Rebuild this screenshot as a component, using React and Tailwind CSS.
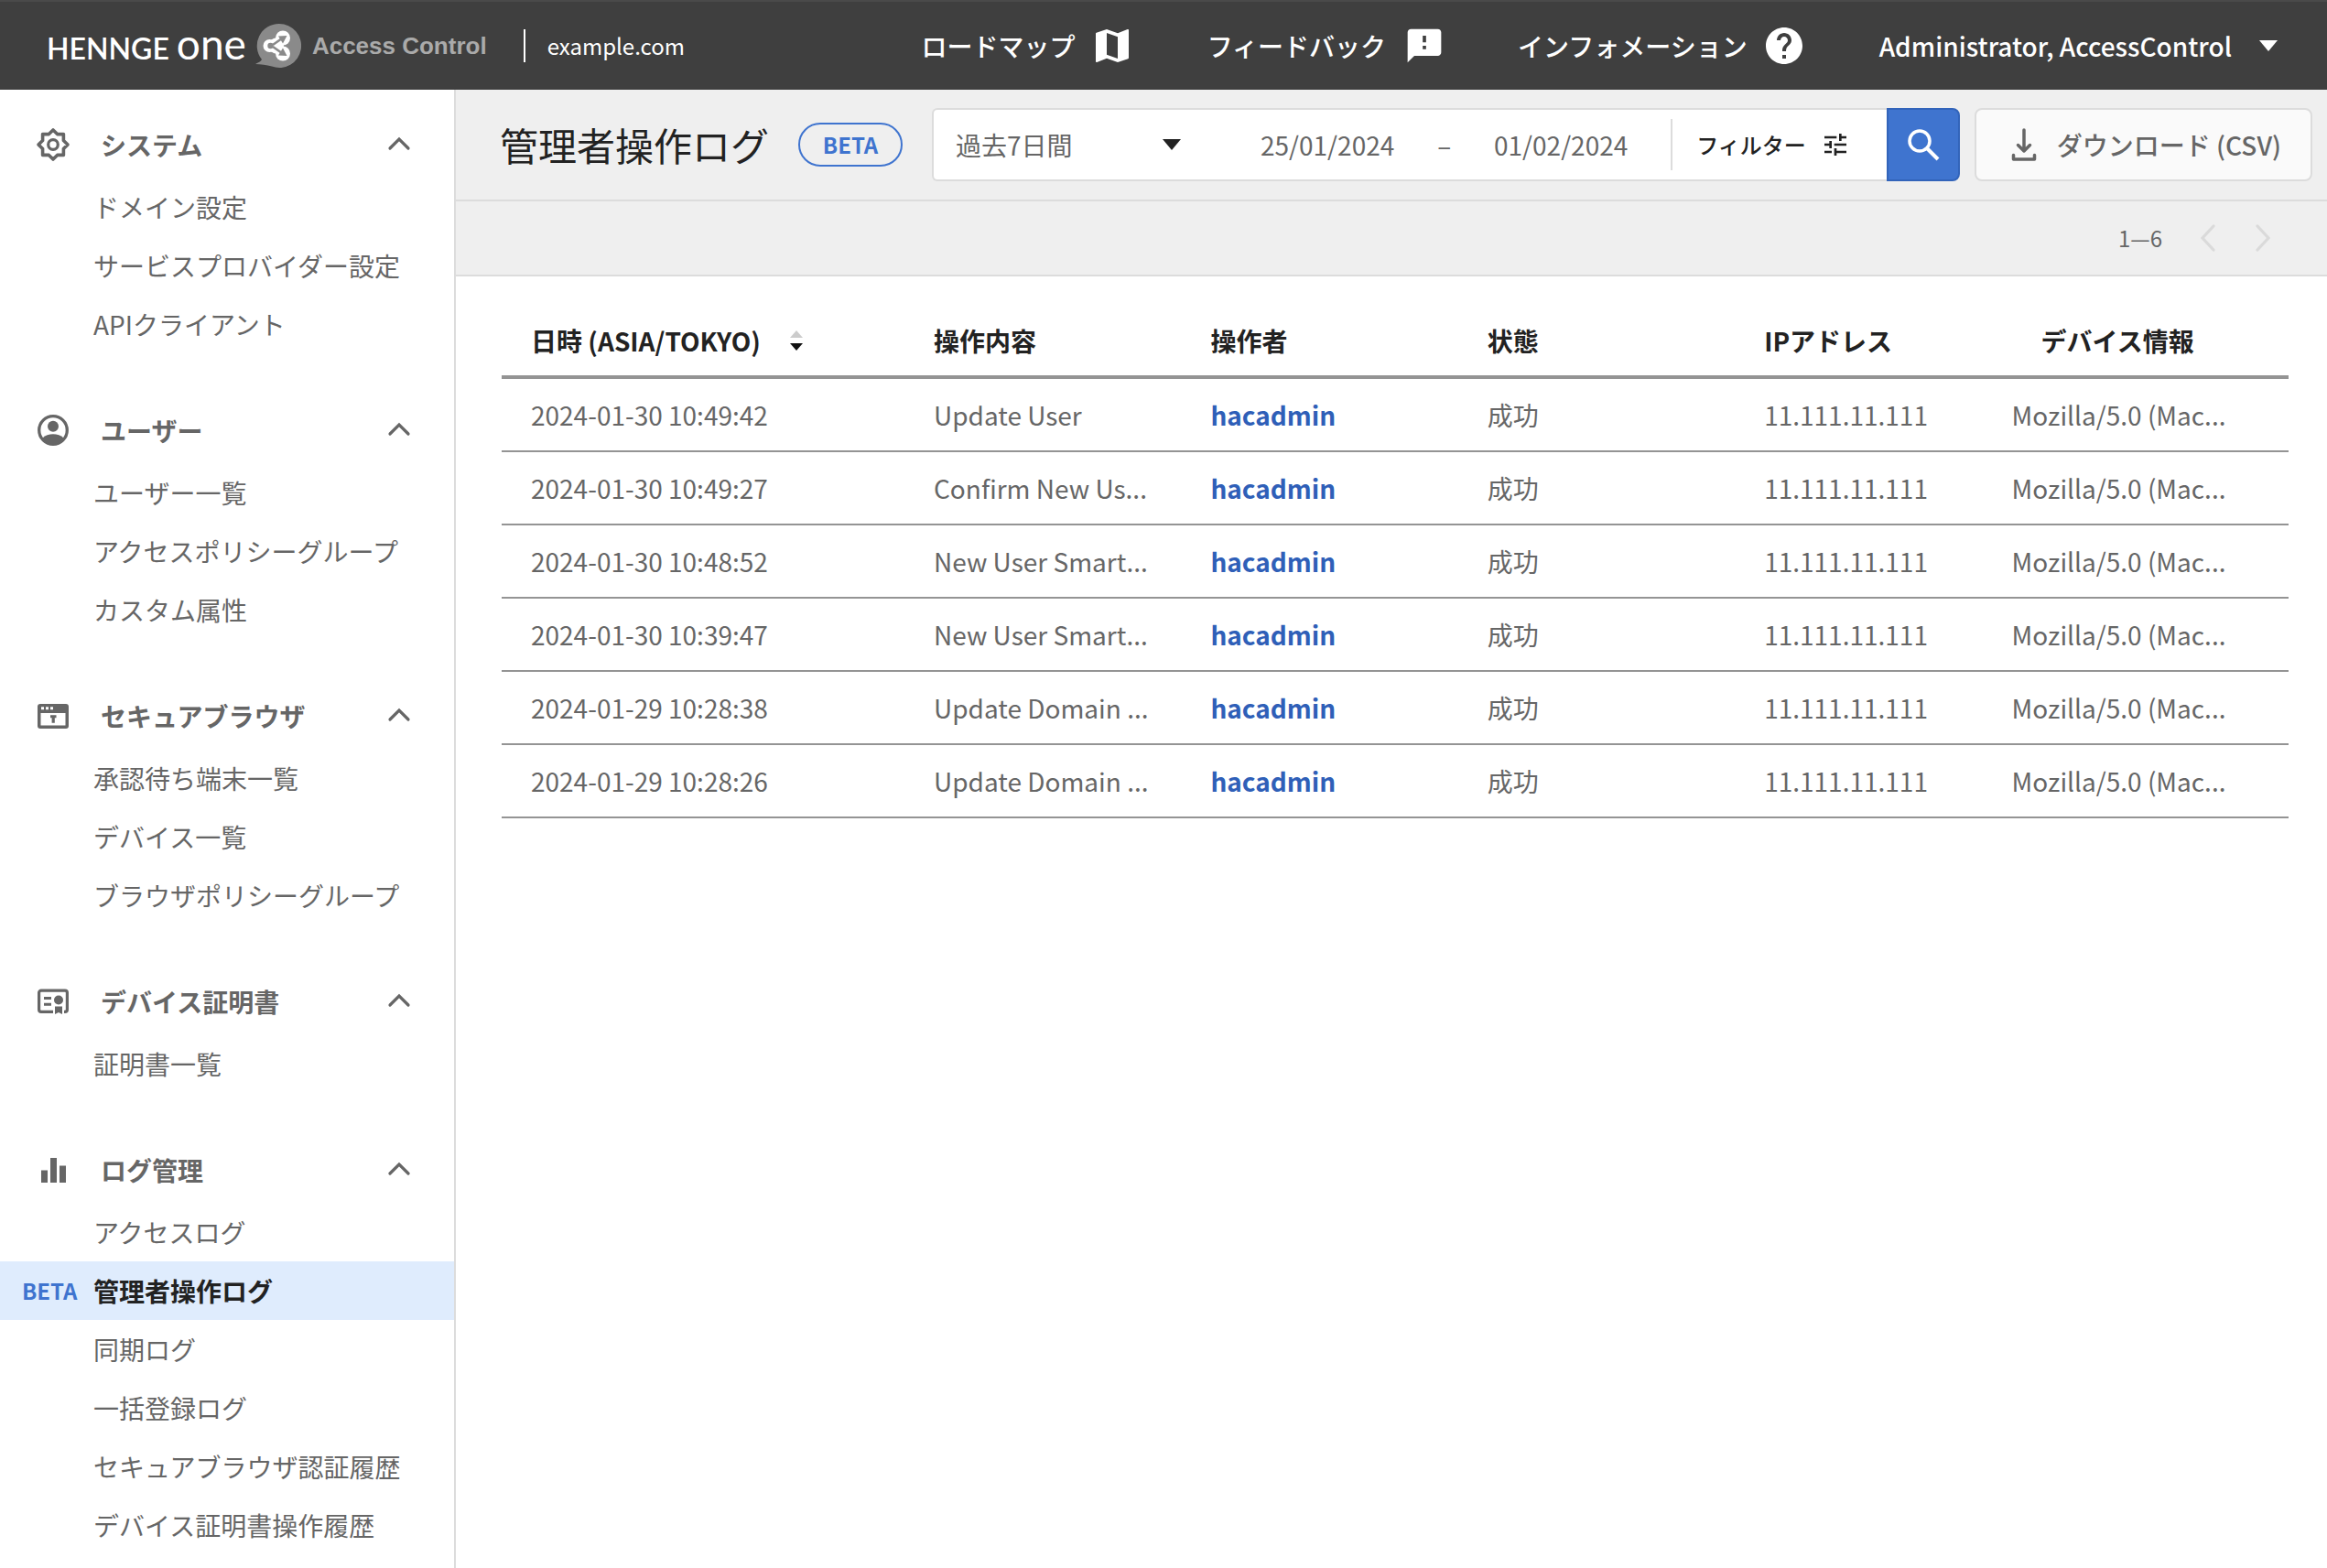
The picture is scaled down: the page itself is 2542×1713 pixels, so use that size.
import React from 'react';
import { MdMap, MdFeedback, MdHelp, MdTune } from 'react-icons/md';

const menu = [
  {
    title: 'システム',
    icon: 'gear',
    items: ['ドメイン設定', 'サービスプロバイダー設定', 'APIクライアント'],
  },
  {
    title: 'ユーザー',
    icon: 'user',
    items: ['ユーザー一覧', 'アクセスポリシーグループ', 'カスタム属性'],
  },
  {
    title: 'セキュアブラウザ',
    icon: 'browser',
    items: ['承認待ち端末一覧', 'デバイス一覧', 'ブラウザポリシーグループ'],
  },
  {
    title: 'デバイス証明書',
    icon: 'certificate',
    items: ['証明書一覧'],
  },
  {
    title: 'ログ管理',
    icon: 'bars',
    items: [
      'アクセスログ',
      '管理者操作ログ',
      '同期ログ',
      '一括登録ログ',
      'セキュアブラウザ認証履歴',
      'デバイス証明書操作履歴',
    ],
  },
];

const activeItem = '管理者操作ログ';

const logs = [
  { time: '2024-01-30 10:49:42', action: 'Update User' },
  { time: '2024-01-30 10:49:27', action: 'Confirm New Us...' },
  { time: '2024-01-30 10:48:52', action: 'New User Smart...' },
  { time: '2024-01-30 10:39:47', action: 'New User Smart...' },
  { time: '2024-01-29 10:28:38', action: 'Update Domain ...' },
  { time: '2024-01-29 10:28:26', action: 'Update Domain ...' },
];

function MenuIcon({ name }) {
  switch (name) {
    case 'gear':
      return (
        <svg viewBox="0 0 40 40" className="size-10" fill="none" stroke="currentColor" strokeWidth="3.6" strokeLinejoin="round">
          <path d="M20 4l4.6 4.6h6.8v6.8L36 20l-4.6 4.6v6.8h-6.8L20 36l-4.6-4.6H8.6v-6.8L4 20l4.6-4.6V8.6h6.8z" />
          <circle cx="20" cy="20" r="5.3" strokeWidth="3.2" />
        </svg>
      );
    case 'user':
      return (
        <svg viewBox="0 0 40 40" className="size-10">
          <circle cx="20" cy="20" r="15.3" fill="none" stroke="currentColor" strokeWidth="3.3" />
          <circle cx="20" cy="15.8" r="6" fill="currentColor" />
          <path d="M8.5 28.5c3-3 7-4.3 11.5-4.3s8.5 1.3 11.5 4.3c-2.5 4-6.5 6.7-11.5 6.7s-9-2.7-11.5-6.7z" fill="currentColor" />
        </svg>
      );
    case 'browser':
      return (
        <svg viewBox="0 0 40 40" className="size-10" fill="currentColor">
          <path
            fillRule="evenodd"
            d="M6 7h28a3 3 0 0 1 3 3v21a3 3 0 0 1-3 3H6a3 3 0 0 1-3-3V10a3 3 0 0 1 3-3zM6.5 17v13.5h27V17zM7 10.3v3h3v-3zM12 10.3v3h3v-3zM17 10.3v3h3v-3z"
          />
          <path d="M17 19.3h6.5v3h-1.7v5.4h-3.2v-5.4H17z" />
        </svg>
      );
    case 'certificate':
      return (
        <svg viewBox="0 0 40 40" className="size-10" fill="none" stroke="currentColor" strokeWidth="3.2">
          <path d="M20 31.4H7a2.4 2.4 0 0 1-2.4-2.4V10.6A2.4 2.4 0 0 1 7 8.2h26a2.4 2.4 0 0 1 2.4 2.4V29a2.4 2.4 0 0 1-2.4 2.4h-1" />
          <path d="M10 16.5h8M10 23.2h8" strokeWidth="3" />
          <circle cx="26" cy="18.5" r="5" fill="currentColor" stroke="none" />
          <path d="M22 25.5h8V34l-4-2-4 2z" fill="currentColor" stroke="none" />
        </svg>
      );
    default:
      return (
        <svg viewBox="0 0 40 40" className="size-10" fill="currentColor">
          <path d="M7 20.5h7V34H7zM17 7h7v27h-7zM27 15.5h7V34h-7z" />
        </svg>
      );
  }
}

function BubbleLogo() {
  return (
    <svg viewBox="0 0 52 50" className="w-[52px] h-[50px]">
      <path d="M28 1a24 24 0 1 1-8 46.600C14 45.500 8 45.500 2 45c3-1.500 6-3 7-5A24 24 0 0 1 28 1z" fill="#8a8a8a" />
      <path d="M18 25l6-3.500M18 25l6 3.500" stroke="#fff" strokeWidth="10" strokeLinecap="round" />
      <g fill="#fff">
        <circle cx="17.500" cy="25" r="7" />
        <circle cx="32" cy="16.500" r="8" />
        <circle cx="32" cy="33.500" r="8" />
        <circle cx="28" cy="25" r="5" />
      </g>
      <circle cx="18.500" cy="25" r="3.200" fill="#8a8a8a" />
      <path d="M21 24l10-7M21 26l10 7" stroke="#8a8a8a" strokeWidth="2.600" />
      <path d="M27 14.500l9.500-.5-4.500 8.500zM27 35.500l9.500.5-4.500-8.500z" fill="#8a8a8a" />
    </svg>
  );
}

function Triangle() {
  return (
    <svg viewBox="0 0 20 12" className="w-5 h-3" fill="currentColor">
      <path d="M0 0h20L10 12z" />
    </svg>
  );
}

function Chevron({ d }) {
  return (
    <svg viewBox="0 0 32 32" className="size-8" fill="none" stroke="currentColor" strokeWidth="3.2" strokeLinecap="round">
      <path d={d} />
    </svg>
  );
}

function Header() {
  return (
    <header className="flex items-center h-[98px] bg-[#3f3f3f] border-t-2 border-[#4a4a4a] pl-[51px] pr-[54px] text-white">
      <a href="#home" className="flex items-center">
        <span className="flex items-baseline gap-2 font-[Lato]">
          <span className="text-[32px] leading-[60px] font-semibold">HENNGE</span>
          <span className="text-[46px] leading-[60px]">one</span>
        </span>
        <span className="ml-2">
          <BubbleLogo />
        </span>
        <span className="ml-3 font-['Liberation_Sans'] font-bold text-[26px] text-[#aaaaaa]">Access Control</span>
      </a>
      <div className="w-0.5 h-9 ml-10 mr-6 bg-white" />
      <span className="text-[24px]">example.com</span>

      <nav className="flex items-center gap-20 ml-auto text-[28px] font-medium">
        <a href="#roadmap" className="flex items-center gap-4">
          ロードマップ
          <MdMap className="size-12" />
        </a>
        <a href="#feedback" className="flex items-center gap-5">
          フィードバック
          <MdFeedback className="size-11" />
        </a>
        <a href="#information" className="flex items-center gap-4">
          インフォメーション
          <MdHelp className="size-12" />
        </a>
        <button type="button" className="flex items-center gap-[30px]">
          Administrator, AccessControl
          <Triangle />
        </button>
      </nav>
    </header>
  );
}

function Sidebar() {
  return (
    <aside className="w-[498px] shrink-0 border-r-2 border-[#dcdcdc] pt-6 text-[28px] text-[#666666]">
      {menu.map((group) => (
        <section key={group.title} className="mb-12 last:mb-0">
          <button type="button" className="flex items-center w-full h-[72px] pl-[38px] pr-11 font-bold">
            <MenuIcon name={group.icon} />
            <span className="ml-8">{group.title}</span>
            <span className="ml-auto">
              <Chevron d="M6 20L16 10l10 10" />
            </span>
          </button>
          <ul>
            {group.items.map((item) =>
              item === activeItem ? (
                <li key={item}>
                  <a href="#log" className="flex items-center h-16 bg-[#dfecfd] font-bold text-[#222222]">
                    <span className="w-[102px] pl-6 text-[24px] text-[#3f74cf]">BETA</span>
                    {item}
                  </a>
                </li>
              ) : (
                <li key={item}>
                  <a href="#log" className="flex items-center h-16 pl-[102px]">
                    {item}
                  </a>
                </li>
              )
            )}
          </ul>
        </section>
      ))}
    </aside>
  );
}

function Toolbar() {
  return (
    <div className="flex items-center h-[122px] pl-12 pr-4 bg-[#efefef] border-b-2 border-[#dcdcdc]">
      <h1 className="text-[42px] leading-[60px] text-[#222222] whitespace-nowrap">管理者操作ログ</h1>
      <span className="flex items-center justify-center w-[114px] h-12 ml-8 rounded-full border-2 border-[#3f74cf] text-[24px] font-bold text-[#3f74cf]">
        BETA
      </span>

      <form className="flex flex-1 h-20 ml-8 text-[28px] text-[#666666]">
        <div className="flex flex-1 items-center bg-white border-2 border-r-0 border-[#dcdcdc] rounded-l-md">
          <div className="relative w-[310px] h-full">
            <select aria-label="期間" className="appearance-none w-full h-full pl-6 bg-transparent outline-none">
              <option>過去7日間</option>
            </select>
            <span className="absolute right-10 inset-y-0 flex items-center text-[#222222] pointer-events-none">
              <Triangle />
            </span>
          </div>
          <div className="flex flex-1 items-center justify-center gap-10">
            <input aria-label="開始日" type="text" defaultValue="25/01/2024" className="w-40 text-center outline-none" />
            <span>–</span>
            <input aria-label="終了日" type="text" defaultValue="01/02/2024" className="w-40 text-center outline-none" />
          </div>
          <button
            type="button"
            className="flex items-center gap-4 h-14 pl-[26px] pr-10 border-l-2 border-[#dcdcdc] text-[24px] font-medium text-[#222222]"
          >
            フィルター
            <MdTune className="size-8" />
          </button>
        </div>
        <button
          type="submit"
          aria-label="検索"
          className="flex items-center justify-center w-20 h-20 bg-[#3f74cf] border-2 border-[#3264ba] rounded-r-lg text-white"
        >
          <svg viewBox="0 0 40 40" className="size-10" fill="none" stroke="currentColor" strokeWidth="3.5">
            <circle cx="16" cy="16" r="11" />
            <path d="M24 24l12 12" strokeWidth="4" />
          </svg>
        </button>
      </form>

      <button
        type="button"
        className="flex items-center gap-[18px] h-20 ml-4 pl-[34px] pr-8 bg-[#fafafa] border-2 border-[#dcdcdc] rounded-lg text-[28px] font-medium text-[#666666]"
      >
        <svg viewBox="0 0 36 40" className="w-9 h-10" fill="none" stroke="currentColor" strokeWidth="3.5" strokeLinecap="round" strokeLinejoin="round">
          <path d="M18 4v23M11.5 20.5L18 27l6.5-6.5M6.5 31.5V36h23v-4.500" />
        </svg>
        ダウンロード (CSV)
      </button>
    </div>
  );
}

function Pager() {
  return (
    <div className="flex items-center justify-end h-[82px] pr-[54px] bg-[#efefef] border-b-2 border-[#dcdcdc]">
      <span className="text-[24px] text-[#666666]">1—6</span>
      <div className="flex gap-7 ml-[34px] text-[#dadada]">
        <button type="button" aria-label="前へ">
          <Chevron d="M22 3L10 16l12 13" />
        </button>
        <button type="button" aria-label="次へ">
          <Chevron d="M10 3l12 13-12 13" />
        </button>
      </div>
    </div>
  );
}

function LogTable() {
  const th = 'h-[84px] pt-1 pl-8 border-b-4 border-[#949494]';
  const td = 'h-20 pl-8 border-b-2 border-[#949494]';

  return (
    <div className="pt-7 pl-[50px] pr-[42px]">
      <table className="w-full table-fixed border-separate border-spacing-0 text-left text-[28px] text-[#666666]">
        <thead>
          <tr className="text-[#222222]">
            <th className={`w-[440px] ${th}`}>
              <div className="flex items-center gap-8">
                日時 (ASIA/TOKYO)
                <svg viewBox="0 0 14 22" className="w-3.5 h-[22px]">
                  <path d="M7 0l7 8H0z" fill="#cccccc" />
                  <path d="M0 14h14l-7 8z" fill="#111111" />
                </svg>
              </div>
            </th>
            <th className={th}>操作内容</th>
            <th className={th}>操作者</th>
            <th className={th}>状態</th>
            <th className={th}>IPアドレス</th>
            <th className={th}>デバイス情報</th>
          </tr>
        </thead>
        <tbody>
          {logs.map((log) => (
            <tr key={log.time} className="whitespace-nowrap">
              <td className={td}>{log.time}</td>
              <td className={td}>{log.action}</td>
              <td className={td}>
                <a href="#user" className="font-bold text-[#2f5fb8]">hacadmin</a>
              </td>
              <td className={td}>成功</td>
              <td className={td}>11.111.11.111</td>
              <td className="h-20 border-b-2 border-[#949494]">Mozilla/5.0 (Mac...</td>
            </tr>
          ))}
        </tbody>
      </table>
    </div>
  );
}

function App() {
  return (
    <div lang="ja" className="flex flex-col min-h-screen bg-white font-['Noto_Sans_CJK_JP',sans-serif]">
      <Header />
      <div className="flex flex-1">
        <Sidebar />
        <main className="flex-1 min-w-0">
          <Toolbar />
          <Pager />
          <LogTable />
        </main>
      </div>
    </div>
  );
}

export default App;
